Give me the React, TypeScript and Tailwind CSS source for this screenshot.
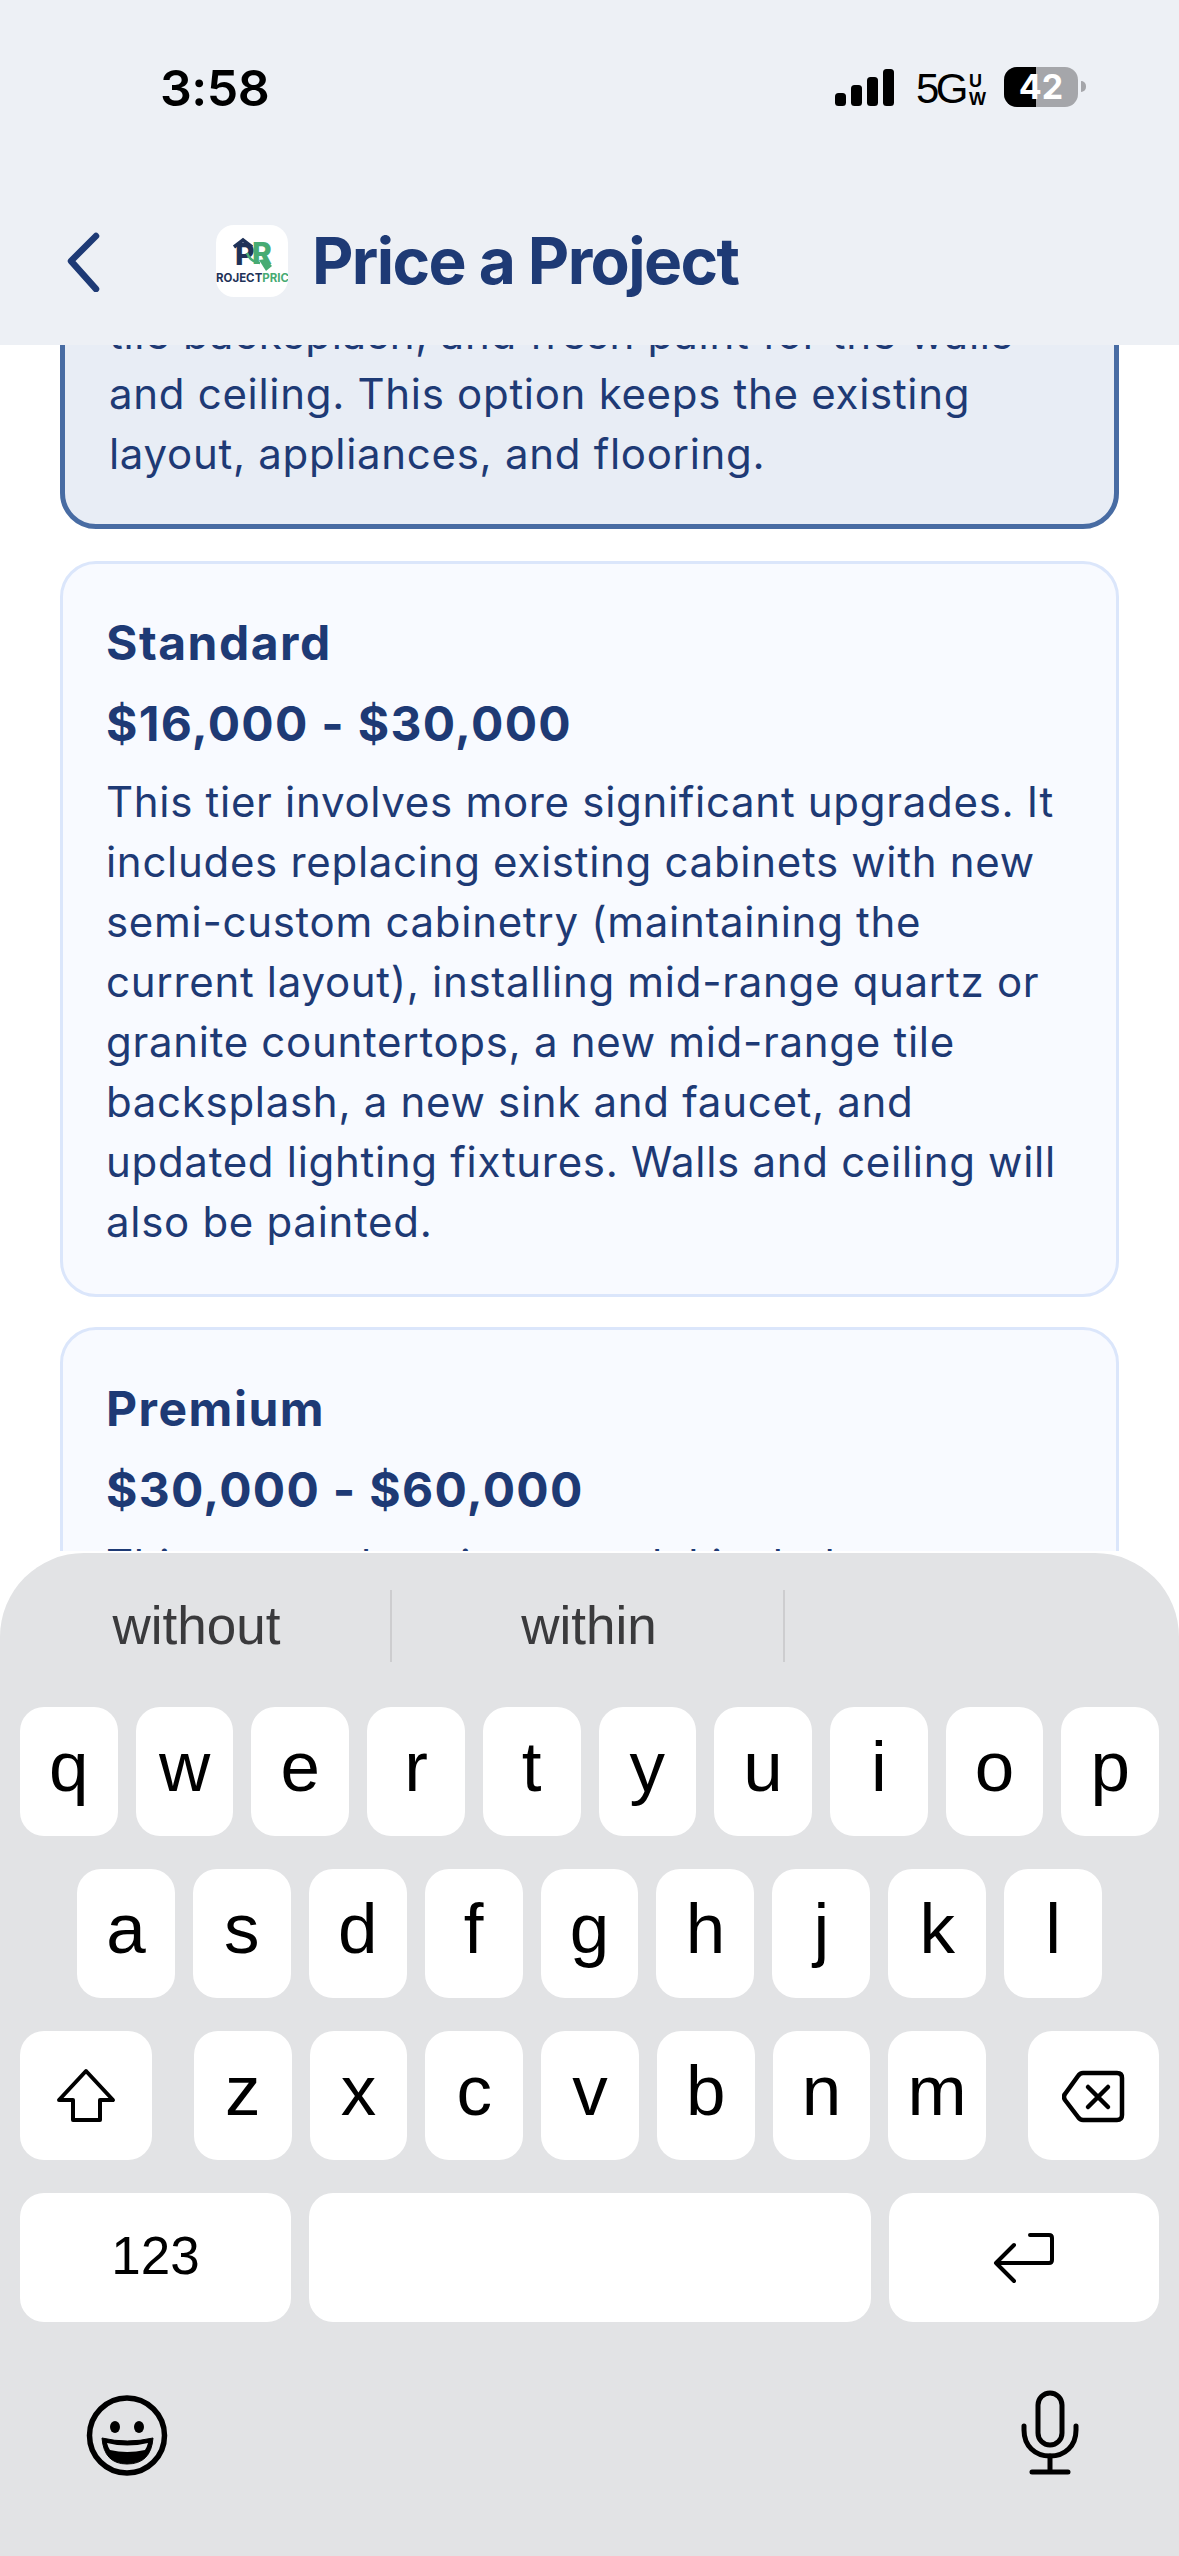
const navy = "text-[#1e3a75]";

function Key({ c, className = "" }: { c: string; className?: string }) {
  return (
    <div className={`flex h-[129px] flex-1 items-center justify-center rounded-[24px] bg-white pb-[10px] text-[71px] leading-none text-black ${className}`}>
      {c}
    </div>
  );
}

function Row({ keys, className = "" }: { keys: string; className?: string }) {
  return (
    <div className={`flex gap-[18px] ${className}`}>
      {keys.split("").map((k) => (
        <Key key={k} c={k} />
      ))}
    </div>
  );
}

function StatusBar() {
  return (
    <div className="flex h-[200px] items-start justify-between pl-[160px] pr-[93px] pt-[62px]">
      <div className="font-['Inter',sans-serif] text-[50px] font-semibold leading-[52px] tracking-[-0.5px] text-black">3:58</div>
      <div className="flex items-start pt-[5px]">
        <svg width="60" height="40" viewBox="0 0 60 40" className="mt-[2px]">
          <rect x="0" y="24" width="11" height="13" rx="3.5" />
          <rect x="16" y="16" width="11" height="21" rx="3.5" />
          <rect x="32" y="8" width="11" height="29" rx="3.5" />
          <rect x="48" y="0" width="11" height="37" rx="3.5" />
        </svg>
        <div className="ml-[21px] font-['Liberation_Sans',sans-serif] text-[42px] font-normal leading-[44px] tracking-[-3.5px] text-black">5G</div>
        <div className="ml-[4px] flex flex-col pt-[5px] font-['Liberation_Sans',sans-serif] text-[18px] font-bold leading-[18px] text-black">
          <span>U</span>
          <span>W</span>
        </div>
        <div className="relative ml-[18px] flex h-[40px] w-[74px] overflow-hidden rounded-[13px] bg-[#a5a6aa] font-['Inter',sans-serif]">
          <div className="h-full w-[32px] bg-black" />
          <div className="absolute inset-0 flex items-center justify-center text-[34px] font-bold leading-none text-white">42</div>
        </div>
        <div className="ml-[3px] mt-[14px] h-[11px] w-[5px] rounded-r-full bg-[#a5a6aa]" />
      </div>
    </div>
  );
}

function Logo() {
  return (
    <div className="relative h-[72px] w-[72px] overflow-hidden rounded-[18px] bg-white font-['Inter',sans-serif]">
      <span className="absolute left-[19px] top-[13px] text-[30px] font-extrabold leading-[32px] text-[#1f3258]">P</span>
      <span className="absolute left-[36px] top-[12px] text-[30px] font-extrabold leading-[32px] text-[#47ab73]">R</span>
      <svg width="72" height="72" viewBox="0 0 72 72" className="absolute left-0 top-0">
        <path d="M18 22 L27 15 L36 22" fill="none" stroke="#1f3258" strokeWidth="3.5" />
        <path d="M31 28 C33 34 38 37 44 38" fill="none" stroke="#47ab73" strokeWidth="2.5" />
        <path d="M43 35 L50 34 L56 41 L50 46 Z" fill="#47ab73" />
      </svg>
      <div className="absolute left-0 top-[46px] w-[72px] whitespace-nowrap text-center text-[11.5px] font-bold leading-[14px]">
        <span className="text-[#1f3258]">ROJECT</span>
        <span className="text-[#47ab73]">PRIC</span>
      </div>
    </div>
  );
}

function Tier({ title, price, lines, bodyClass = "mt-[16px]" }: { title: string; price: string; lines: string[]; bodyClass?: string }) {
  return (
    <div className="rounded-[36px] border-[3px] border-[#dbe6fb] bg-[#f8faff] pl-[43px] pr-[40px] pb-[42px] pt-[47px]">
      <div className={`text-[48px] font-bold leading-[64px] tracking-[1.5px] ${navy}`}>{title}</div>
      <div className={`mt-[17px] text-[48px] font-bold leading-[64px] tracking-[1.3px] ${navy}`}>{price}</div>
      <div className={`${bodyClass} text-[42px] leading-[60px] tracking-[0.7px] ${navy}`}>
        {lines.map((l) => (
          <div key={l} className="whitespace-nowrap">{l}</div>
        ))}
      </div>
    </div>
  );
}

export default function App() {
  return (
    <div className="flex h-[2556px] w-[1179px] flex-col overflow-hidden bg-white font-['Inter',sans-serif]">
      <div className="h-[345px] shrink-0 bg-[#edf0f5]">
        <StatusBar />
        <div className="flex h-[122px] items-center pl-[66px]">
          <svg width="38" height="62" viewBox="0 0 38 62" fill="none" stroke="#1e3a75" strokeWidth="6.5" strokeLinecap="round" strokeLinejoin="round">
            <path d="M30 6 L5 31 L30 59" />
          </svg>
          <div className="ml-[112px]"><Logo /></div>
          <div className={`ml-[24px] text-[64px] font-bold leading-[72px] tracking-[-1.6px] ${navy}`}>Price a Project</div>
        </div>
      </div>

      <div className="h-[1206px] shrink-0 overflow-hidden">
        <div className="mx-[60px] -mt-[46px] rounded-[36px] border-[5px] border-[#486ca3] bg-[#e8edf5] pb-[40px] pl-[44px] pr-[40px]">
          <div className={`text-[42px] leading-[60px] tracking-[0.7px] ${navy}`}>
            <div className="whitespace-nowrap">tile backsplash, and fresh paint for the walls</div>
            <div className="whitespace-nowrap">and ceiling. This option keeps the existing</div>
            <div className="whitespace-nowrap">layout, appliances, and flooring.</div>
          </div>
        </div>
        <div className="mx-[60px] mt-[32px] flex flex-col gap-[30px]">
          <Tier
            title="Standard"
            price="$16,000 - $30,000"
            lines={[
              "This tier involves more significant upgrades. It",
              "includes replacing existing cabinets with new",
              "semi-custom cabinetry (maintaining the",
              "current layout), installing mid-range quartz or",
              "granite countertops, a new mid-range tile",
              "backsplash, a new sink and faucet, and",
              "updated lighting fixtures. Walls and ceiling will",
              "also be painted.",
            ]}
          />
          <Tier title="Premium" price="$30,000 - $60,000" bodyClass="mt-[13px]" lines={["This comprehensive remodel includes"]} />
        </div>
      </div>

      <div className="mt-[2px] flex-1 rounded-t-[84px] bg-[#e2e3e5] font-['Liberation_Sans',sans-serif]">
        <div className="flex h-[154px] items-start pt-[37px]">
          <div className="flex h-[72px] w-[392px] items-center justify-center border-r-[2px] border-[#cdcdcf] pl-[3px] text-[53px] text-[#3a3a3c]">without</div>
          <div className="flex h-[72px] w-[393px] items-center justify-center border-r-[2px] border-[#cdcdcf] pl-[3px] text-[53px] text-[#3a3a3c]">within</div>
        </div>
        <div className="flex flex-col gap-[33px]">
          <Row keys="qwertyuiop" className="px-[20px]" />
          <Row keys="asdfghjkl" className="px-[77px]" />
          <div className="flex justify-between px-[20px]">
            <div className="flex h-[129px] w-[132px] items-center justify-center rounded-[24px] bg-white">
              <svg width="62" height="56" viewBox="0 0 62 56" fill="none" stroke="black" strokeWidth="4" strokeLinejoin="round">
                <path d="M31 3 L58 32 L45 32 L45 52 L18 52 L18 32 L4 32 Z" />
              </svg>
            </div>
            <div className="flex w-[792px] gap-[18px]">
              {"zxcvbnm".split("").map((k) => (
                <Key key={k} c={k} />
              ))}
            </div>
            <div className="flex h-[129px] w-[131px] items-center justify-center rounded-[24px] bg-white pt-[3px]">
              <svg width="64" height="54" viewBox="0 0 64 54" fill="none" stroke="black" strokeWidth="4.5" strokeLinejoin="round" strokeLinecap="round">
                <path d="M21 3 L55 3 Q60 3 60 8 L60 45 Q60 50 55 50 L21 50 Q18 50 16 47 L3 30 Q1 26.5 3 24 L16 6 Q18 3 21 3 Z" />
                <path d="M26 17 L46 37 M46 17 L26 37" />
              </svg>
            </div>
          </div>
          <div className="flex gap-[18px] px-[20px]">
            <div className="flex h-[129px] w-[271px] items-center justify-center rounded-[24px] bg-white pb-[4px] text-[53px] text-black">123</div>
            <div className="h-[129px] flex-1 rounded-[24px] bg-white" />
            <div className="flex h-[129px] w-[270px] items-center justify-center rounded-[24px] bg-white">
              <svg width="62" height="52" viewBox="0 0 62 52" fill="none" stroke="black" strokeWidth="4" strokeLinecap="round" strokeLinejoin="round">
                <path d="M37 3 L56 3 Q59 3 59 6 L59 28 Q59 31 56 31 L3 31 M3 31 L21 13 M3 31 L21 49" />
              </svg>
            </div>
          </div>
        </div>
        <div className="flex items-start justify-between pl-[86px] pr-[100px] pt-[68px]">
          <svg width="82" height="81" viewBox="0 0 82 81" className="mt-[5px]">
            <circle cx="41" cy="40.5" r="37.5" fill="none" stroke="black" strokeWidth="5.5" />
            <ellipse cx="29" cy="32" rx="5" ry="6" />
            <ellipse cx="53" cy="32" rx="5" ry="6" />
            <path d="M16 43 Q41 49 67 43 Q65 69 41 69 Q18 69 16 43 Z" stroke="black" strokeWidth="1" strokeLinejoin="round" />
            <path d="M21 48 Q41 53 62 48 Q61 52 59 55 Q41 59 24 55 Q22 52 21 48 Z" fill="#e2e3e5" />
          </svg>
          <svg width="58" height="86" viewBox="0 0 58 86" fill="none" stroke="black" strokeWidth="5" strokeLinecap="round">
            <rect x="17" y="3" width="24" height="52" rx="12" />
            <path d="M3 36 L3 40 C3 56 14 66 29 66 C44 66 55 56 55 40 L55 36" />
            <path d="M29 66 L29 81 M11 82 L47 82" />
          </svg>
        </div>
      </div>
    </div>
  );
}
